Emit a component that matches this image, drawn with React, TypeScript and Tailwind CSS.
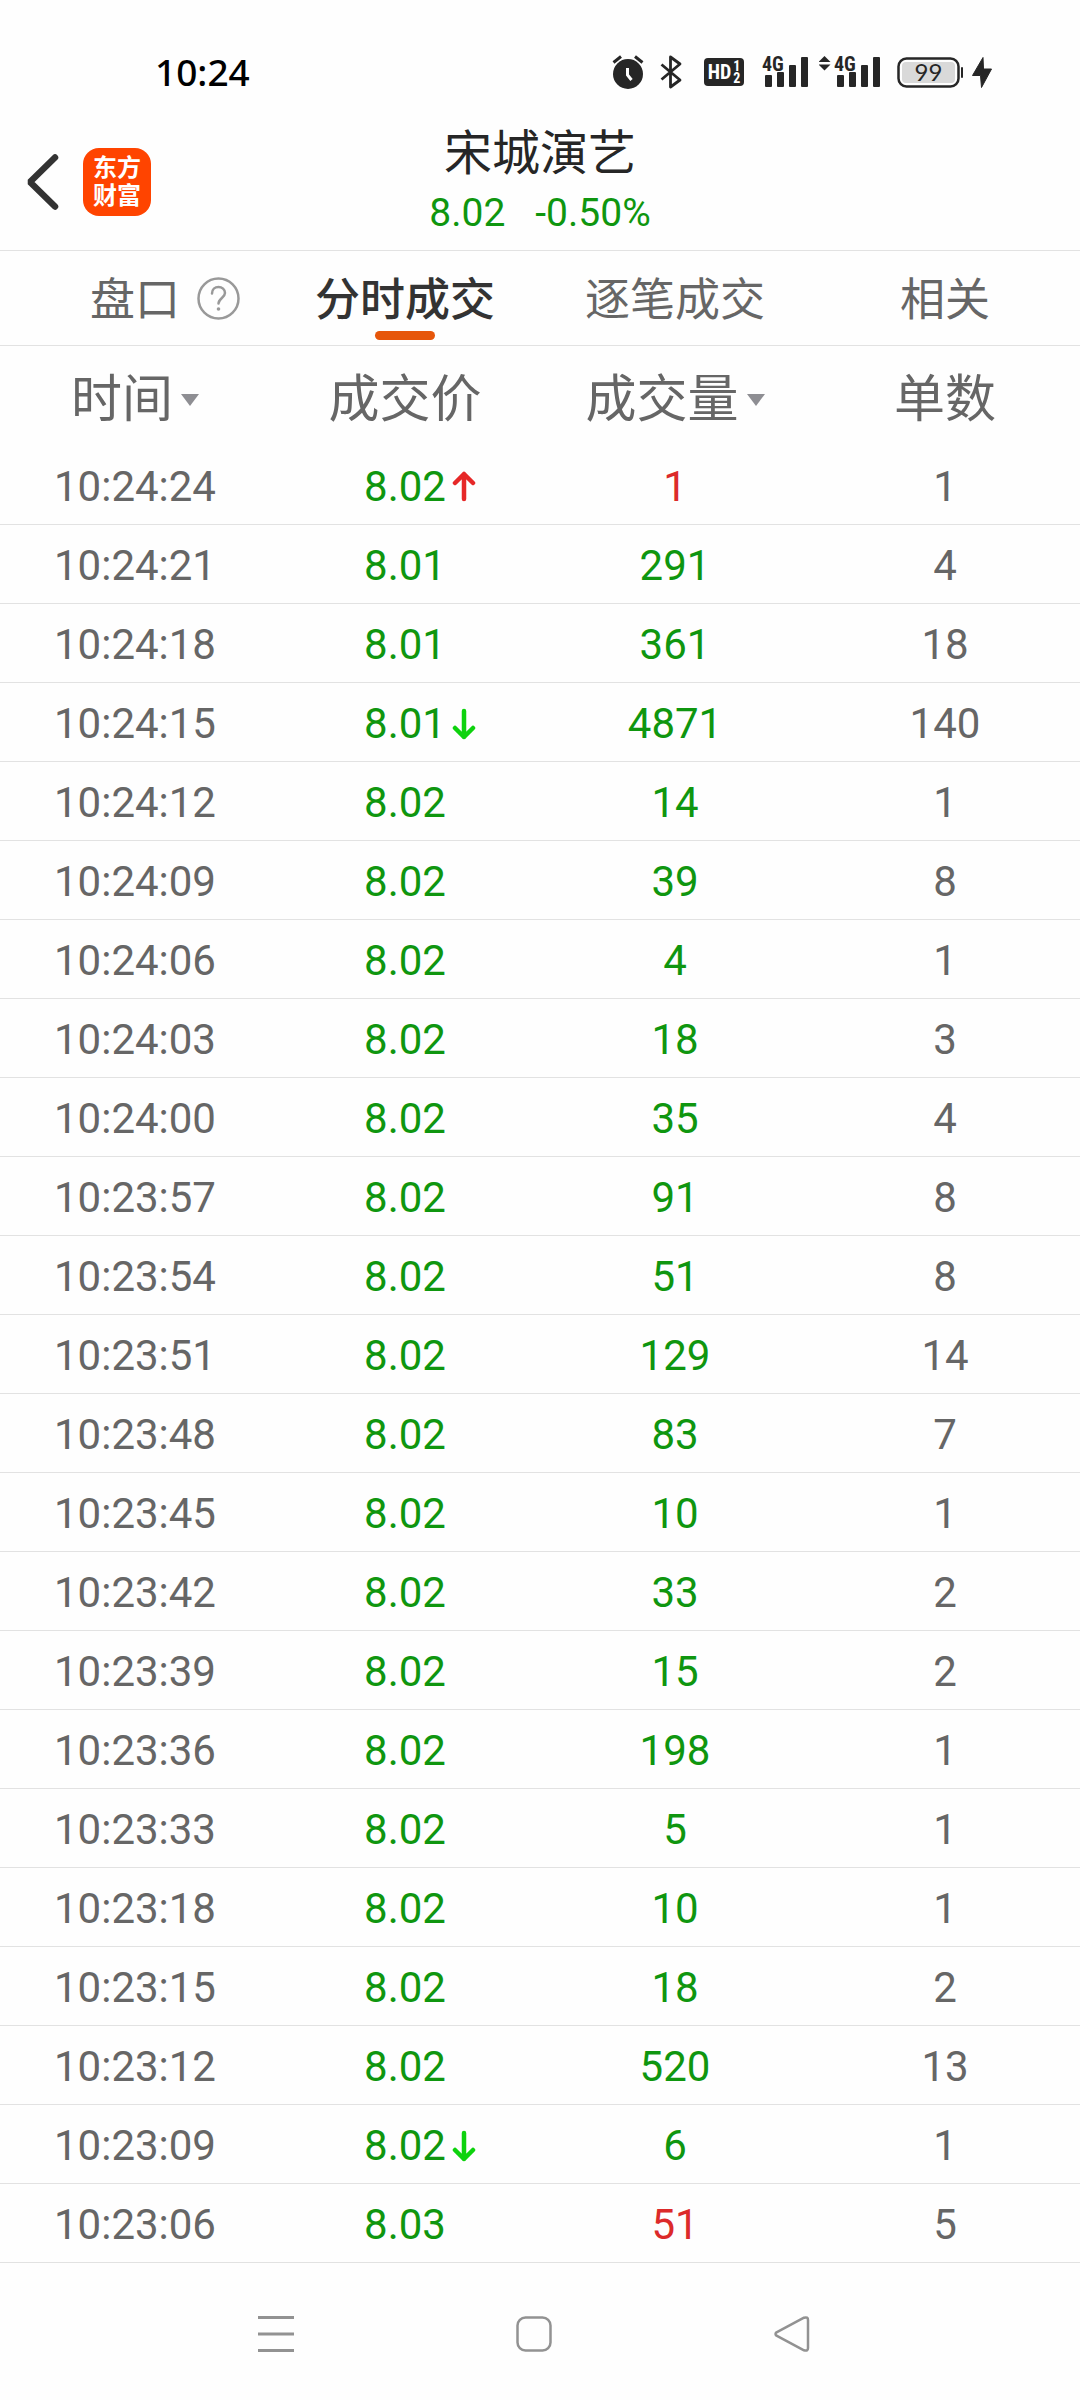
import { useState } from 'react';

type Arrow = 'up' | 'down';

interface Trade {
  time: string;
  price: string;
  volume: number;
  count: number;
  arrow?: Arrow;
  buy?: boolean;
}

const trades: Trade[] = [
  { time: '10:24:24', price: '8.02', volume: 1, count: 1, arrow: 'up', buy: true },
  { time: '10:24:21', price: '8.01', volume: 291, count: 4 },
  { time: '10:24:18', price: '8.01', volume: 361, count: 18 },
  { time: '10:24:15', price: '8.01', volume: 4871, count: 140, arrow: 'down' },
  { time: '10:24:12', price: '8.02', volume: 14, count: 1 },
  { time: '10:24:09', price: '8.02', volume: 39, count: 8 },
  { time: '10:24:06', price: '8.02', volume: 4, count: 1 },
  { time: '10:24:03', price: '8.02', volume: 18, count: 3 },
  { time: '10:24:00', price: '8.02', volume: 35, count: 4 },
  { time: '10:23:57', price: '8.02', volume: 91, count: 8 },
  { time: '10:23:54', price: '8.02', volume: 51, count: 8 },
  { time: '10:23:51', price: '8.02', volume: 129, count: 14 },
  { time: '10:23:48', price: '8.02', volume: 83, count: 7 },
  { time: '10:23:45', price: '8.02', volume: 10, count: 1 },
  { time: '10:23:42', price: '8.02', volume: 33, count: 2 },
  { time: '10:23:39', price: '8.02', volume: 15, count: 2 },
  { time: '10:23:36', price: '8.02', volume: 198, count: 1 },
  { time: '10:23:33', price: '8.02', volume: 5, count: 1 },
  { time: '10:23:18', price: '8.02', volume: 10, count: 1 },
  { time: '10:23:15', price: '8.02', volume: 18, count: 2 },
  { time: '10:23:12', price: '8.02', volume: 520, count: 13 },
  { time: '10:23:09', price: '8.02', volume: 6, count: 1, arrow: 'down' },
  { time: '10:23:06', price: '8.03', volume: 51, count: 5, buy: true },
];

const tabs = [
  { label: '盘口', help: true },
  { label: '分时成交' },
  { label: '逐笔成交' },
  { label: '相关' },
];

const columns = [
  { label: '时间', sortable: true },
  { label: '成交价' },
  { label: '成交量', sortable: true },
  { label: '单数' },
];

function AlarmIcon() {
  return (
    <svg width="32" height="34" viewBox="0 0 32 34" fill="none">
      <circle cx="16" cy="19" r="15" fill="#262626" />
      <path d="M1.5 7.5L9 1.5M30.5 7.5L23 1.5" stroke="#262626" strokeWidth="3" />
      <path d="M15.5 13v7l4 5" stroke="#fff" strokeWidth="3" />
    </svg>
  );
}

function BluetoothIcon() {
  return (
    <svg width="22" height="34" viewBox="0 0 22 34" fill="none" stroke="#262626" strokeWidth="2.8" strokeLinejoin="round">
      <path d="M1.5 9.500L20 25L10.500 32V2L20 9L1.500 24.500" />
    </svg>
  );
}

function SignalIcon({ data = false }: { data?: boolean }) {
  return (
    <svg
      width={data ? 62 : 48}
      height="46"
      viewBox={data ? '-14 -6 62 46' : '0 -6 48 46'}
      fill="#262626"
    >
      {data && (
        <>
          <path d="M-8.5 1l6 6h-12z" />
          <path d="M-8.5 15.5l6-6h-12z" />
        </>
      )}
      <rect x="4" y="20" width="7" height="12" rx="1" />
      <rect x="16" y="17" width="7" height="15" rx="1" />
      <rect x="28" y="10" width="7" height="22" rx="1" />
      <rect x="40" y="2" width="7" height="30" rx="1" />
      <text
        x="1"
        y="15.5"
        fontSize="20"
        fontWeight="700"
        fontFamily="'Roboto Condensed', 'Liberation Sans Narrow', Roboto, sans-serif"
        stroke="#fefefe"
        strokeWidth="2"
        paintOrder="stroke"
      >
        4G
      </text>
    </svg>
  );
}

function BatteryIcon() {
  return (
    <svg width="67" height="34" viewBox="0 0 67 34">
      <rect x="1.5" y="3.5" width="60" height="28" rx="8" fill="#fefefe" stroke="#262626" strokeWidth="2.5" />
      <rect x="5" y="7" width="53" height="21" rx="4" fill="#d9d9d9" />
      <rect x="64" y="12" width="2" height="11" rx="1" fill="#262626" />
      <text x="31.5" y="26" textAnchor="middle" fontSize="24" fontFamily="Lato, sans-serif" fill="#262626">
        99
      </text>
    </svg>
  );
}

function BoltIcon() {
  return (
    <svg width="20" height="34" viewBox="0 0 20 34" fill="#262626">
      <path d="M11 2.5L0.5 20.5H8.5L9.5 32.5L19.5 14H11.5z" stroke="#262626" strokeLinejoin="round" />
    </svg>
  );
}

function StatusBar() {
  return (
    <div className="flex h-24 items-end justify-between pr-[88px] pb-[7px] pl-[155px]">
      <span className="font-['Noto_Sans',sans-serif] text-[37px] leading-[34px] font-medium text-black">10:24</span>
      <div className="flex h-[34px] items-center">
        <AlarmIcon />
        <span className="w-4" />
        <BluetoothIcon />
        <span className="w-[22px]" />
        <span className="flex h-7 w-10 items-center justify-center gap-0.5 rounded bg-[#262626] font-['Roboto_Condensed','Liberation_Sans_Narrow',Roboto,sans-serif] text-xl leading-7 font-bold text-white">
          HD
          <span className="flex flex-col text-[14px] leading-[12px]">
            <span>1</span>
            <span>2</span>
          </span>
        </span>
        <span className="w-[17px]" />
        <SignalIcon />
        <span className="w-2.5" />
        <SignalIcon data />
        <span className="w-4" />
        <BatteryIcon />
        <span className="w-2" />
        <BoltIcon />
      </div>
    </div>
  );
}

function PriceArrow({ dir }: { dir: Arrow }) {
  return (
    <svg
      className="absolute top-1/2 left-full ml-1.5 -translate-y-1/2"
      width="24"
      height="32"
      viewBox="0 0 24 32"
      fill="none"
      stroke={dir === 'up' ? '#e62828' : '#0ed20e'}
      strokeWidth="4.5"
      strokeLinecap="round"
      strokeLinejoin="round"
    >
      <path d={dir === 'up' ? 'M12 28V3M3 12l9-9 9 9' : 'M12 3v26M3 20l9 9 9-9'} />
    </svg>
  );
}

function Header() {
  return (
    <header className="grid h-[155px] grid-cols-3 items-center border-b border-[#e2e2e2]">
      <div className="flex items-center gap-6 pt-[18px] pl-[25px]">
        <button type="button" aria-label="返回">
          <svg width="34" height="56" viewBox="0 0 34 56" fill="none" stroke="#333" strokeWidth="6.5" strokeLinecap="round">
            <path d="M30 3.5L5 28L30 52.5" strokeLinejoin="bevel" />
          </svg>
        </button>
        <div className="flex size-[68px] flex-col items-center justify-center rounded-2xl bg-[#ff4400] text-2xl leading-7 font-bold text-white">
          <span>东方</span>
          <span>财富</span>
        </div>
      </div>
      <div className="pt-5 text-center whitespace-nowrap">
        <h1 className="text-[48px] leading-[60px] text-[#262626]">宋城演艺</h1>
        <p className="flex justify-center gap-[30px] text-[39px] leading-[58px] text-[#0f960f]">
          <span>8.02</span>
          <span>-0.50%</span>
        </p>
      </div>
    </header>
  );
}

export default function App() {
  const [active, setActive] = useState('分时成交');

  return (
    <div className="w-full bg-[#fefefe] font-['Roboto','Noto_Sans_CJK_SC',sans-serif] text-[#666]">
      <StatusBar />
      <Header />

      <nav className="grid h-[95px] grid-cols-4 border-b border-[#e2e2e2]">
        {tabs.map((tab) => (
          <button
            key={tab.label}
            type="button"
            onClick={() => setActive(tab.label)}
            className={`relative flex items-center justify-center pt-1.5 text-[45px] leading-[60px] ${
              active === tab.label ? 'font-medium text-[#333]' : ''
            }`}
          >
            <span className="relative">
              {tab.label}
              {tab.help && (
                <svg
                  className="absolute top-[6px] left-full ml-[17px]"
                  width="43"
                  height="43"
                  viewBox="0 0 43 43"
                  fill="none"
                  stroke="#999"
                  strokeWidth="2.5"
                  strokeLinecap="round"
                >
                  <circle cx="21.5" cy="21.5" r="20" />
                  <path d="M15 16.5c0-4 3-6.5 6.500-6.5s6.500 2.500 6.500 6c0 4.500-6.500 5.500-6.500 10.500" />
                  <circle cx="21.5" cy="32" r="1.8" fill="#999" stroke="none" />
                </svg>
              )}
            </span>
            {active === tab.label && (
              <span className="absolute bottom-[5px] left-1/2 h-[9px] w-[60px] -translate-x-1/2 rounded-full bg-[#e6560a]" />
            )}
          </button>
        ))}
      </nav>

      <table className="w-full table-fixed border-separate border-spacing-0 text-center">
        <thead>
          <tr className="h-[100px] text-[51px] leading-[60px]">
            {columns.map((col) => (
              <th key={col.label} scope="col" className="p-0 font-normal">
                <span className="flex items-center justify-center gap-2 pt-2">
                  {col.label}
                  {col.sortable && (
                    <svg width="18" height="12" viewBox="0 0 18 12" fill="#8e8e93">
                      <path d="M0 0h18L9 12z" />
                    </svg>
                  )}
                </span>
              </th>
            ))}
          </tr>
        </thead>
        <tbody>
          {trades.map((t) => (
            <tr
              key={t.time}
              className="h-[79px] text-[42px] leading-[60px] *:border-b *:border-[#e2e2e2] *:px-0 *:pt-1 *:pb-0"
            >
              <td>{t.time}</td>
              <td className="text-[#0f960f]">
                <span className="relative">
                  {t.price}
                  {t.arrow && <PriceArrow dir={t.arrow} />}
                </span>
              </td>
              <td className={t.buy ? 'text-[#dc2a2a]' : 'text-[#0f960f]'}>{t.volume}</td>
              <td>{t.count}</td>
            </tr>
          ))}
        </tbody>
      </table>

      {/* system navigation */}
      <div className="flex h-[137px] items-center justify-center gap-[222px] pt-1 pr-3">
        <button type="button" aria-label="最近任务">
          <svg width="36" height="36" viewBox="0 0 36 36" stroke="#929292" strokeWidth="3">
            <path d="M0 1.5h36M0 18h36M0 34.5h36" />
          </svg>
        </button>
        <button type="button" aria-label="主屏幕">
          <svg width="36" height="36" viewBox="0 0 36 36" fill="none" stroke="#929292" strokeWidth="2.5">
            <rect x="1.5" y="1.5" width="33" height="33" rx="8" />
          </svg>
        </button>
        <button type="button" aria-label="返回上一页">
          <svg width="36" height="36" viewBox="0 0 36 36" fill="none" stroke="#929292" strokeWidth="2.5" strokeLinejoin="round">
            <path d="M2.5 16.3L30 1.7Q34 0.5 34 4V32Q34 35.5 30 34.3L2.5 19.7Q0.5 18 2.5 16.3z" />
          </svg>
        </button>
      </div>
    </div>
  );
}
